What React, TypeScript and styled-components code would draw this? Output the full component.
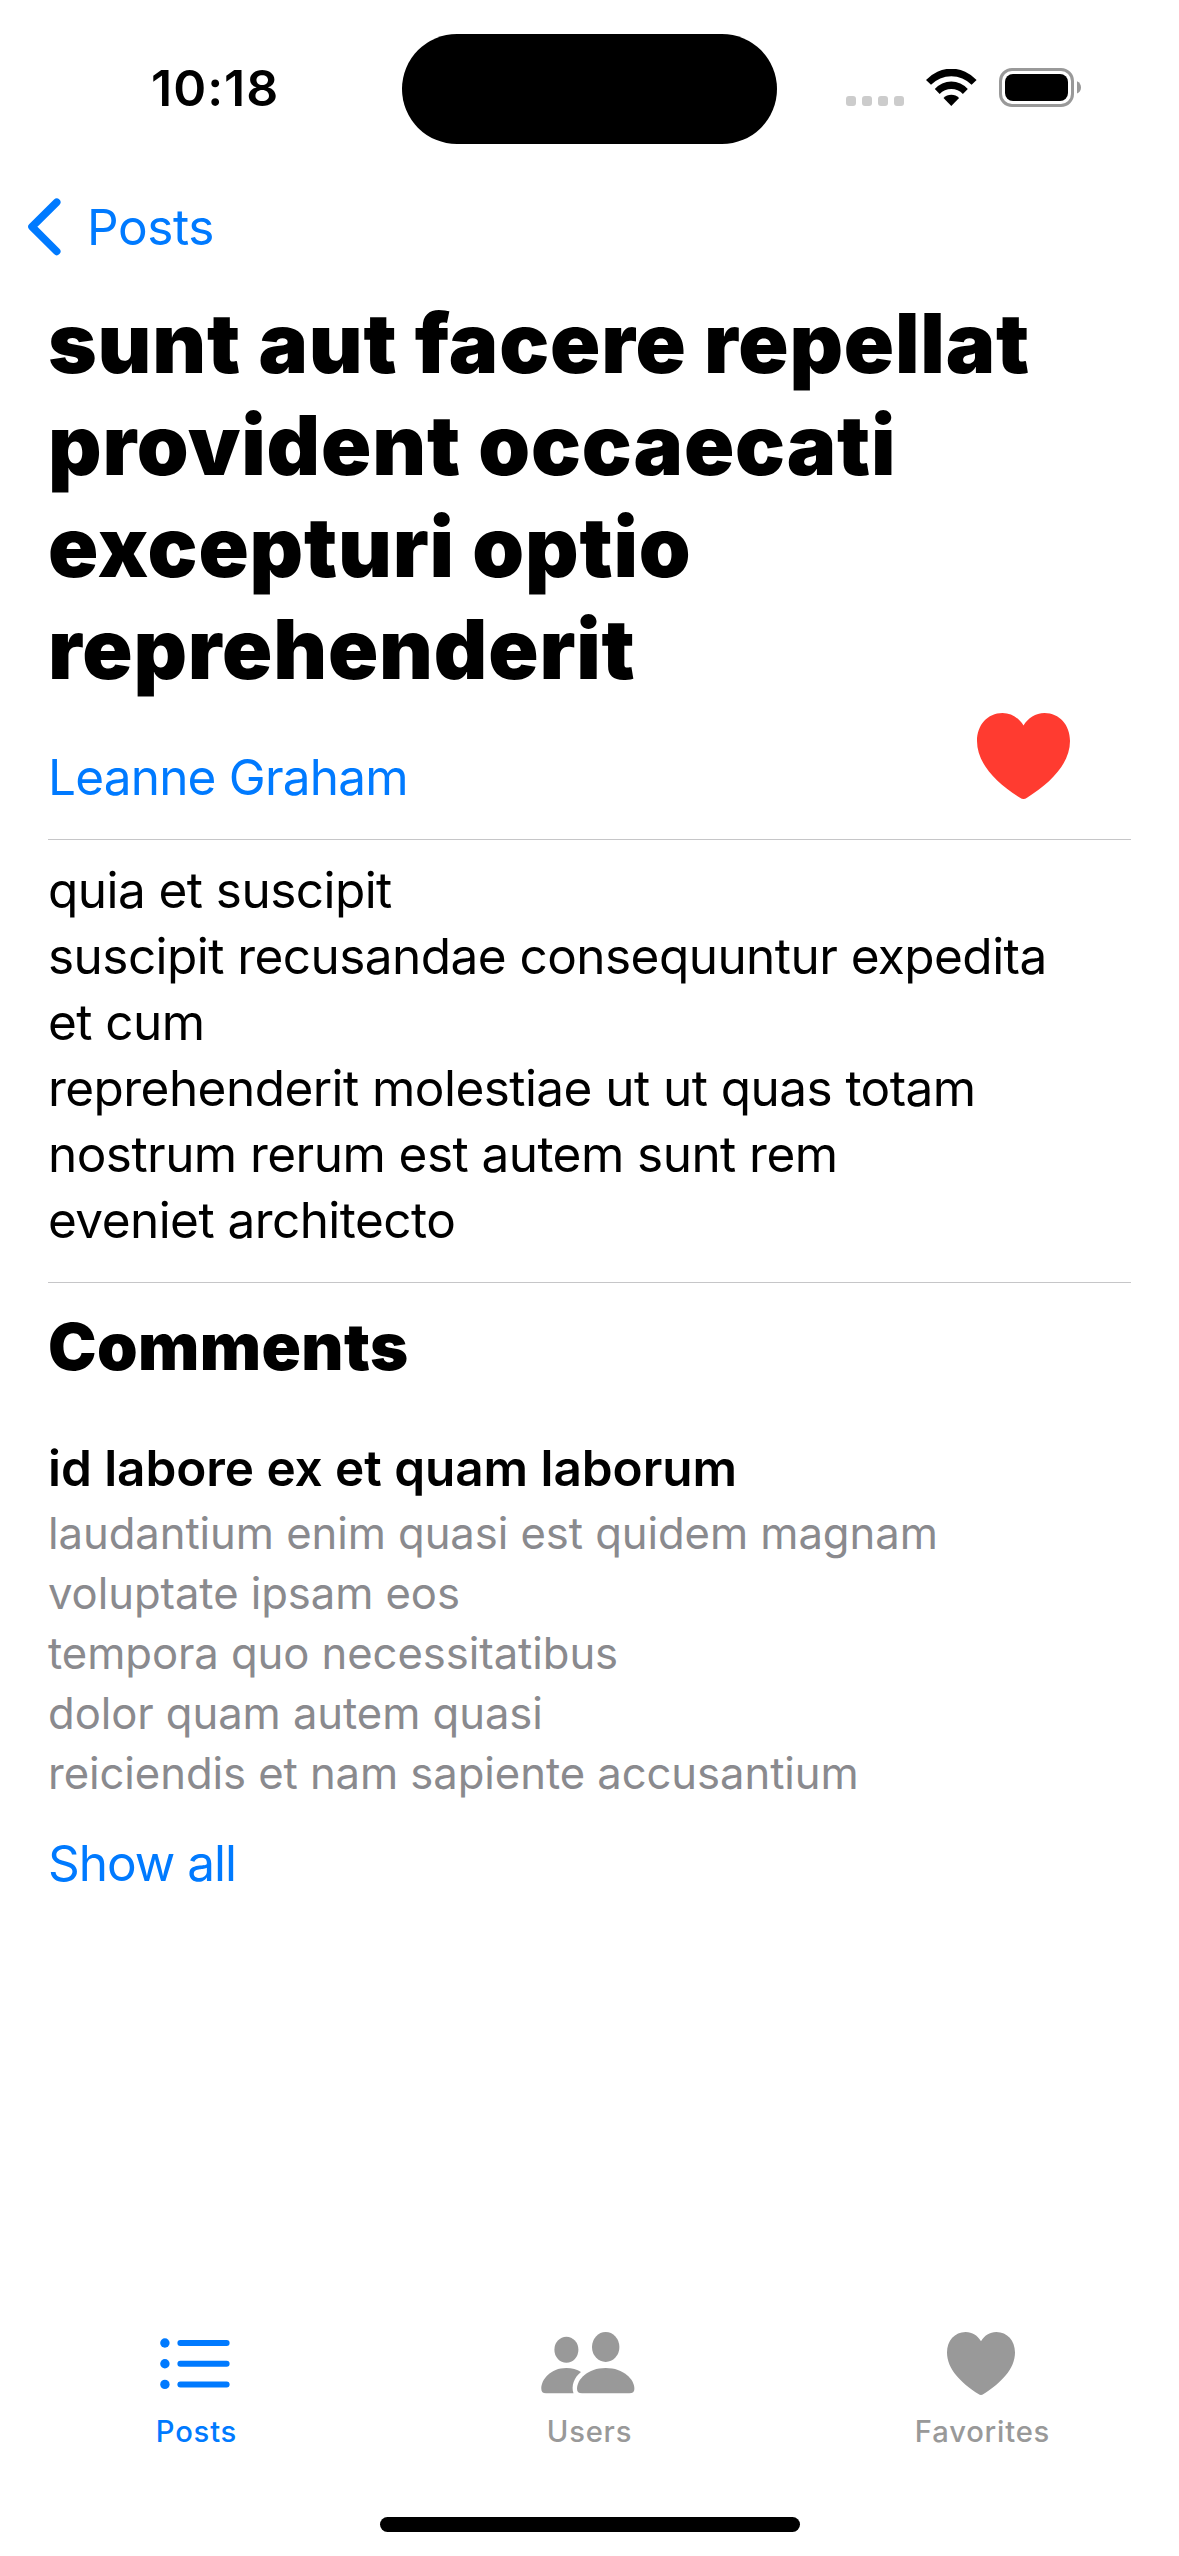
import React from 'react';
import styled, { createGlobalStyle } from 'styled-components';

const BLUE = '#007aff';
const GRAY = '#999999';

const GlobalStyle = createGlobalStyle`
  * { box-sizing: border-box; }
  body {
    margin: 0;
    background: #fff;
    color: #000;
    font-family: 'Inter', 'Roboto', sans-serif;
  }
  h1, h2, h3, p { margin: 0; }
  button {
    border: 0;
    padding: 0;
    background: none;
    font-family: inherit;
    cursor: pointer;
  }
  svg { display: block; flex: none; }
`;

const Screen = styled.div`
  width: 1179px;
  height: 2556px;
  display: flex;
  flex-direction: column;
  background: #fff;
  overflow: hidden;
`;

const StatusBar = styled.header`
  height: 177px;
  display: grid;
  grid-template-columns: 1fr 375px 1fr;
  align-items: start;
`;

const Clock = styled.time`
  padding: 55px 0 0 151px;
  font-size: 50px;
  font-weight: 600;
  line-height: 66px;
  letter-spacing: 1px;
`;

const Island = styled.div`
  height: 110px;
  margin-top: 34px;
  border-radius: 55px;
  background: #000;
`;

const StatusIcons = styled.div`
  display: flex;
  align-items: flex-start;
  padding: 68px 0 0 69px;
`;

const SignalDots = styled.div`
  display: flex;
  gap: 6px;
  margin: 28px 22px 0 0;
`;

const Dot = styled.span`
  width: 10px;
  height: 10px;
  border-radius: 3px;
  background: #cccccc;
`;

const WifiSlot = styled.div`
  margin: 1px 22px 0 0;
`;

const NavBar = styled.nav`
  height: 99px;
  display: flex;
  align-items: center;
`;

const BackButton = styled.button`
  display: flex;
  align-items: center;
  gap: 25px;
  padding-left: 27px;
  color: ${BLUE};
  font-size: 49.5px;
  line-height: 66px;
  letter-spacing: -0.4px;
`;

const Content = styled.main`
  flex: 1;
  padding: 16px 48px 0;
`;

const Title = styled.h1`
  font-size: 83px;
  font-weight: 900;
  line-height: 102px;
  letter-spacing: 0.83px;
`;

const AuthorRow = styled.div`
  height: 139px;
  display: flex;
  align-items: flex-start;
  justify-content: space-between;
  padding: 13px 61px 0 0;
`;

const TextLink = styled.button<{ $top: number; $spacing: number }>`
  display: block;
  margin-top: ${(p) => p.$top}px;
  color: ${BLUE};
  font-size: 49.5px;
  line-height: 66px;
  letter-spacing: ${(p) => p.$spacing}px;
`;

const Divider = styled.hr`
  height: 1px;
  margin: 0;
  border: 0;
  background: #c6c6c8;
`;

const Body = styled.p`
  padding: 17px 48px 29px 0;
  font-size: 49.5px;
  line-height: 66px;
  letter-spacing: -0.55px;
  white-space: pre-line;
  height: 442px;
`;

const SectionTitle = styled.h2`
  margin-top: 22px;
  font-size: 65px;
  font-weight: 900;
  line-height: 84px;
  letter-spacing: 0.4px;
`;

const Comment = styled.article`
  margin-top: 46px;
`;

const CommentTitle = styled.h3`
  font-size: 49.5px;
  font-weight: 600;
  line-height: 66px;
  letter-spacing: -0.06px;
`;

const CommentBody = styled.p`
  margin-top: 3px;
  color: #8a8a8e;
  font-size: 43.6px;
  line-height: 60px;
  letter-spacing: -0.06px;
  white-space: pre-line;
`;

const TabBar = styled.nav`
  height: 192px;
  display: grid;
  grid-template-columns: repeat(3, 1fr);
`;

const Tab = styled.button<{ $active?: boolean }>`
  display: flex;
  flex-direction: column;
  align-items: center;
  color: ${(p) => (p.$active ? BLUE : GRAY)};
`;

const TabIcon = styled.span<{ $top?: number }>`
  height: 89px;
  display: flex;
  padding: ${(p) => p.$top ?? 7}px 3px 0 0;
`;

const TabLabel = styled.span`
  font-size: 29.2px;
  font-weight: 500;
  line-height: 36px;
  letter-spacing: 0.8px;
`;

const HomeArea = styled.footer`
  height: 39px;
  display: flex;
  justify-content: center;
  align-items: flex-start;
`;

const HomeIndicator = styled.div`
  width: 420px;
  height: 15px;
  border-radius: 8px;
  background: #000;
`;

const WifiIcon = () => (
  <svg width="51" height="38" viewBox="0 0 51 38" fill="#000">
    <path d="M0 11 A33.9 33.9 0 0 1 50.6 11 L45.6 15.7 A28.4 28.4 0 0 0 5 15.7 Z" />
    <path d="M8.8 20 A22 22 0 0 1 41.8 20 L36.9 25 A16 16 0 0 0 13.7 25 Z" />
    <path d="M17.5 29 A11 11 0 0 1 33.1 29 L25.3 37 Z" />
  </svg>
);

const BatteryIcon = () => (
  <svg width="83" height="39" viewBox="0 0 83 39">
    <rect x="1.5" y="1.5" width="72" height="36" rx="11.5" fill="none" stroke="#999" strokeWidth="3" />
    <rect x="6" y="6" width="63" height="27" rx="8" fill="#000" />
    <path d="M78 13.3 C80.6 14.4 82 16.7 82 19.4 C82 22.1 80.6 24.4 78 25.5 Z" fill="#999" />
  </svg>
);

const ChevronIcon = () => (
  <svg width="35" height="60" viewBox="0 0 35 60">
    <path
      d="M29.7 5.2 L5 29.8 L29.7 54.4"
      fill="none"
      stroke={BLUE}
      strokeWidth="7.6"
      strokeLinecap="round"
      strokeLinejoin="round"
    />
  </svg>
);

const HeartIcon = ({ width, height, color }: { width: number; height: number; color: string }) => (
  <svg width={width} height={height} viewBox="0 0 93 86" preserveAspectRatio="none" fill={color}>
    <path d="M46.5 12.5 C42 5 34.5 0 25.5 0 C10.5 0 0 12 0 28 C0 50.5 19 69.5 43 84.8 C44.2 85.6 45.4 86 46.5 86 C47.6 86 48.8 85.6 50 84.8 C74 69.5 93 50.5 93 28 C93 12 82.5 0 67.5 0 C58.5 0 51 5 46.5 12.5 Z" />
  </svg>
);

const ListIcon = () => (
  <svg width="70" height="52" viewBox="0 0 70 52" fill={BLUE}>
    {[5, 25.8, 46.4].map((y) => (
      <React.Fragment key={y}>
        <circle cx="4.9" cy={y} r="4.7" />
        <rect x="17.4" y={y - 3} width="52.2" height="6" rx="3" />
      </React.Fragment>
    ))}
  </svg>
);

const UsersIcon = () => (
  <svg width="94" height="62" viewBox="0 0 94 62" fill={GRAY}>
    <ellipse cx="64.7" cy="15" rx="13.7" ry="15" />
    <ellipse cx="25.4" cy="17.8" rx="12" ry="13" />
    <path d="M41 61.3 C37.5 61.3 36 59.8 36 56.8 C36 47.5 46.5 36 64.7 36 C82.8 36 93.4 47.5 93.4 56.8 C93.4 59.8 91.8 61.3 88.4 61.3 Z" />
    <path d="M5 61.3 C1.8 61.3 0.3 59.8 0.3 56.8 C0.3 47.5 9.5 36 25.3 36 C31 36 36 37.5 40 40 C33 45.5 30 54 32.5 61.3 Z" />
  </svg>
);

const POST_BODY = `quia et suscipit
suscipit recusandae consequuntur expedita et cum
reprehenderit molestiae ut ut quas totam
nostrum rerum est autem sunt rem
eveniet architecto`;

const COMMENT_BODY = `laudantium enim quasi est quidem magnam
voluptate ipsam eos
tempora quo necessitatibus
dolor quam autem quasi
reiciendis et nam sapiente accusantium`;

export default function App() {
  return (
    <>
      <GlobalStyle />
      <Screen>
        <StatusBar>
          <Clock>10:18</Clock>
          <Island />
          <StatusIcons>
            <SignalDots>
              <Dot />
              <Dot />
              <Dot />
              <Dot />
            </SignalDots>
            <WifiSlot>
              <WifiIcon />
            </WifiSlot>
            <BatteryIcon />
          </StatusIcons>
        </StatusBar>

        <NavBar>
          <BackButton>
            <ChevronIcon />
            Posts
          </BackButton>
        </NavBar>

        <Content>
          <Title>sunt aut facere repellat provident occaecati excepturi optio reprehenderit</Title>
          <AuthorRow>
            <TextLink $top={31} $spacing={-0.8}>Leanne Graham</TextLink>
            <HeartIcon width={93} height={86} color="#ff3b30" />
          </AuthorRow>
          <Divider />
          <Body>{POST_BODY}</Body>
          <Divider />
          <SectionTitle>Comments</SectionTitle>
          <Comment>
            <CommentTitle>id labore ex et quam laborum</CommentTitle>
            <CommentBody>{COMMENT_BODY}</CommentBody>
          </Comment>
          <TextLink $top={26} $spacing={-1}>Show all</TextLink>
        </Content>

        <TabBar>
          <Tab $active>
            <TabIcon $top={13}>
              <ListIcon />
            </TabIcon>
            <TabLabel>Posts</TabLabel>
          </Tab>
          <Tab>
            <TabIcon>
              <UsersIcon />
            </TabIcon>
            <TabLabel>Users</TabLabel>
          </Tab>
          <Tab>
            <TabIcon>
              <HeartIcon width={68} height={63} color={GRAY} />
            </TabIcon>
            <TabLabel>Favorites</TabLabel>
          </Tab>
        </TabBar>
        <HomeArea>
          <HomeIndicator />
        </HomeArea>
      </Screen>
    </>
  );
}
